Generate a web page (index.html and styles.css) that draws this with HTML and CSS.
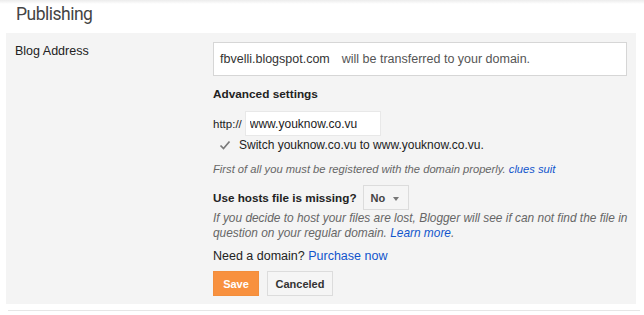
FILE: index.html
```html
<!DOCTYPE html>
<html>
<head>
<meta charset="utf-8">
<title>Publishing</title>
<link rel="stylesheet" href="styles.css">
</head>
<body>

<div class="topbar"></div>
<h1 class="title">Publishing</h1>

<div class="panel">
  <div class="label">Blog Address</div>
  <div class="field">
    <div class="addressBox">
      <span class="oldAddress">fbvelli.blogspot.com</span>
      <span class="addressNote">will be transferred to your domain.</span>
    </div>

    <div class="heading">Advanced settings</div>

    <div class="httpRow">
      <span>http://</span>
      <input type="text" class="domainInput" value="www.youknow.co.vu">
    </div>

    <div class="checkRow">
      <svg class="check" width="12" height="11" viewBox="0 0 12 11">
        <path d="M1.5 5.5 L4.5 8.5 L10.5 1.5" fill="none" stroke="#7a7a7a" stroke-width="1.7"/>
      </svg>
      <span>Switch youknow.co.vu to www.youknow.co.vu.</span>
    </div>

    <div class="hint">First of all you must be registered with the domain properly. <a href="#">clues suit</a></div>

    <div class="hostsRow">
      <span class="heading inline">Use hosts file is missing?</span>
      <button class="dropdown">No <span class="arrow"></span></button>
    </div>
    <div class="hint tight">If you decide to host your files are lost, Blogger will see if can not find the file in<br>question on your regular domain. <a href="#">Learn more</a>.</div>

    <div class="buyRow">Need a domain? <a href="#">Purchase now</a></div>

    <div class="buttons">
      <button class="btnSave">Save</button>
      <button class="btnCancel">Canceled</button>
    </div>
  </div>
</div>
<div class="rule"></div>

</body>
</html>
```

FILE: styles.css
```css
body {
  margin: 0;
  background: #fff;
  font-family: "Liberation Sans", Arial, sans-serif;
  font-size: 12.5px;
  color: #222;
}
a {
  color: #15c;
  text-decoration: none;
}
.topbar {
  height: 4px;
  background: linear-gradient(#ececec, #fff);
}
.title {
  margin: 0;
  height: 29px;
  padding-left: 16px;
  font-family: Roboto, "Liberation Sans", sans-serif;
  font-weight: normal;
  font-size: 17.5px;
  letter-spacing: -0.5px;
  line-height: 20px;
  color: #444;
}
.panel {
  margin: 0 8px 0 6px;
  background: #f4f4f4;
  display: grid;
  grid-template-columns: 207px 1fr;
  padding: 9px 9px 8px 0;
}
.label {
  padding-left: 9px;
  line-height: 16px;
  padding-top: 1px;
}
.addressBox {
  height: 32px;
  border: 1px solid #d6d6d6;
  background: #fff;
  display: flex;
  align-items: center;
  padding-left: 6px;
  margin-bottom: 10px;
}
.oldAddress {
  color: #333;
  margin-right: 12px;
}
.addressNote {
  color: #555;
}
.heading {
  font-weight: bold;
  font-size: 11.8px;
  line-height: 16px;
  color: #222;
}
.heading.inline {
  font-size: 11.7px;
  margin-right: 6px;
}
.httpRow {
  display: flex;
  align-items: center;
  margin-top: 9px;
  gap: 3px;
  font-size: 11.5px;
}
.domainInput {
  box-sizing: border-box;
  width: 136px;
  height: 25px;
  border: 1px solid #e8e8e8;
  background: #fff;
  font-family: "Liberation Sans", Arial, sans-serif;
  font-size: 12px;
  color: #222;
  padding: 0 0 0 4px;
  outline: none;
}
.checkRow {
  display: flex;
  align-items: center;
  margin-top: 1px;
  padding-left: 6px;
  line-height: 16px;
  font-size: 12px;
}
.check {
  margin-right: 8px;
}
.hint {
  font-style: italic;
  font-size: 11.2px;
  color: #666;
  margin-top: 9px;
  line-height: 14px;
}
.hostsRow {
  display: flex;
  align-items: center;
  margin-top: 9px;
}
.dropdown {
  height: 25px;
  width: 46px;
  border: 1px solid #dcdcdc;
  background: #f5f5f5;
  font-family: "Liberation Sans", Arial, sans-serif;
  font-size: 11px;
  font-weight: bold;
  color: #444;
  padding: 0 0 0 7px;
  text-align: left;
}
.arrow {
  display: inline-block;
  margin-left: 5px;
  vertical-align: middle;
  border-left: 3px solid transparent;
  border-right: 3px solid transparent;
  border-top: 4px solid #777;
}
.hint.tight {
  font-size: 11.9px;
  white-space: nowrap;
  margin-top: 1px;
  line-height: 15px;
}
.buyRow {
  margin-top: 7px;
  line-height: 16px;
}
.buttons {
  display: flex;
  gap: 8px;
  margin-top: 7px;
}
.btnSave,
.btnCancel {
  height: 25px;
  font-family: "Liberation Sans", Arial, sans-serif;
  font-size: 11px;
  font-weight: bold;
  padding: 0;
}
.btnSave {
  width: 46px;
  border: 1px solid #f28e3c;
  background: #f8913f;
  color: #fff;
}
.btnCancel {
  width: 66px;
  border: 1px solid #dcdcdc;
  background: #f5f5f5;
  color: #333;
}
.rule {
  margin: 6px 4px 0 8px;
  height: 1px;
  background: #e6e6e6;
}
```
